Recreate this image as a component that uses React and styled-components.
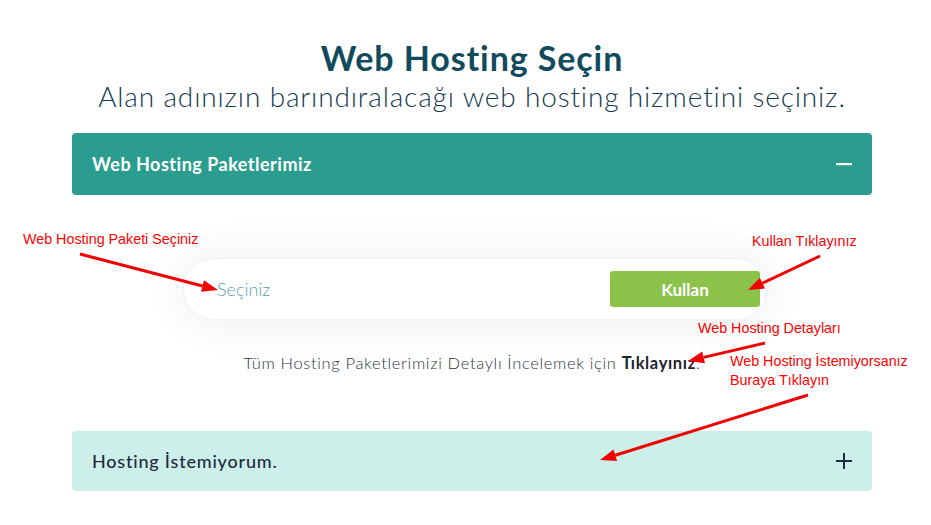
import styled, { createGlobalStyle } from "styled-components";

const GlobalStyle = createGlobalStyle`
  html, body {
    margin: 0;
    padding: 0;
    background: #ffffff;
  }
  body {
    font-family: "Lato", "Open Sans", sans-serif;
  }
`;

const Page = styled.div`
  position: relative;
  width: 931px;
  height: 525px;
  overflow: hidden;
  background: #fff;
`;

const Main = styled.div`
  display: flex;
  flex-direction: column;
  padding: 38px 59px 0 72px;
`;

const Title = styled.h1`
  margin: 0;
  text-align: center;
  font-size: 34px;
  line-height: 40px;
  font-weight: 700;
  letter-spacing: 0.9px;
  color: #0f4b5c;
`;

const Subtitle = styled.p`
  margin: 0;
  text-align: center;
  font-size: 28px;
  line-height: 36px;
  font-weight: 300;
  letter-spacing: 0.85px;
  color: #163b4f;
`;

const AccordionHead = styled.div`
  display: flex;
  align-items: center;
  justify-content: space-between;
  height: ${(p) => (p.$open ? "62px" : "60px")};
  padding: 0 20px;
  border-radius: 4px;
  background: ${(p) => (p.$open ? "#2a9d8f" : "#cdefe9")};
  color: ${(p) => (p.$open ? "#ffffff" : "#1e2a40")};
  font-size: 18px;
  letter-spacing: ${(p) => (p.$open ? "0.5px" : "0.8px")};
  font-weight: ${(p) => (p.$open ? 700 : 500)};
  margin-top: ${(p) => (p.$open ? "19px" : "0")};
`;

const Body = styled.div`
  display: flex;
  flex-direction: column;
  align-items: center;
  padding: 63px 0 0;
  height: 173px;
`;

const SearchCard = styled.div`
  display: flex;
  align-items: center;
  justify-content: space-between;
  width: 584px;
  height: 62px;
  box-sizing: border-box;
  margin-left: 6px;
  padding: 0 6px 0 33px;
  border-radius: 31px;
  background: #fff;
  border: 1px solid #f2f2f2;
  box-shadow: 0 0 45px rgba(0, 0, 0, 0.08);
`;

const Placeholder = styled.span`
  font-size: 18px;
  font-weight: 300;
  color: #5b9fb0;
`;

const UseButton = styled.button`
  width: 150px;
  height: 36px;
  border: none;
  border-radius: 3px;
  background: #8bc34a;
  color: #fff;
  font-family: inherit;
  font-size: 17px;
  font-weight: 700;
  cursor: pointer;
`;

const InfoLine = styled.p`
  margin: 33px 0 0;
  font-size: 16.5px;
  font-weight: 300;
  letter-spacing: 0.65px;
  color: #2d3340;
  b {
    font-weight: 700;
    color: #1e2330;
  }
`;

const Annotations = styled.div`
  position: absolute;
  inset: 0;
  pointer-events: none;
`;

const Note = styled.span`
  position: absolute;
  left: ${(p) => p.$x}px;
  top: ${(p) => p.$y}px;
  font-family: "Liberation Sans", sans-serif;
  font-size: 14.3px;
  line-height: 19px;
  color: #ff0000;
  white-space: nowrap;
`;

const Arrows = styled.svg`
  position: absolute;
  inset: 0;
`;

function Minus() {
  return (
    <svg width="16" height="16" viewBox="0 0 16 16">
      <rect x="0" y="7" width="16" height="2.2" fill="currentColor" />
    </svg>
  );
}

function Plus() {
  return (
    <svg width="16" height="16" viewBox="0 0 16 16">
      <rect x="0" y="7" width="16" height="2" fill="currentColor" />
      <rect x="7" y="0" width="2" height="16" fill="currentColor" />
    </svg>
  );
}

const arrows = [
  [80, 254, 218, 290],
  [820, 256, 748, 290],
  [765, 343, 688, 361],
  [808, 395, 600, 460],
];

function Arrow({ from }) {
  const [x1, y1, x2, y2] = from;
  const a = Math.atan2(y2 - y1, x2 - x1);
  const len = 16;
  const w = 6;
  const bx = x2 - len * Math.cos(a);
  const by = y2 - len * Math.sin(a);
  const px = -Math.sin(a) * w;
  const py = Math.cos(a) * w;
  return (
    <g>
      <line x1={x1} y1={y1} x2={bx} y2={by} stroke="#f00000" strokeWidth="3" />
      <polygon
        points={`${x2},${y2} ${bx + px},${by + py} ${bx - px},${by - py}`}
        fill="#f00000"
      />
    </g>
  );
}

export default function App() {
  return (
    <Page>
      <GlobalStyle />
      <Main>
        <Title>Web Hosting Seçin</Title>
        <Subtitle>Alan adınızın barındıralacağı web hosting hizmetini seçiniz.</Subtitle>
        <AccordionHead $open>
          <span>Web Hosting Paketlerimiz</span>
          <Minus />
        </AccordionHead>
        <Body>
          <SearchCard>
            <Placeholder>Seçiniz</Placeholder>
            <UseButton>Kullan</UseButton>
          </SearchCard>
          <InfoLine>
            Tüm Hosting Paketlerimizi Detaylı İncelemek için <b>Tıklayınız</b>.
          </InfoLine>
        </Body>
        <AccordionHead>
          <span>Hosting İstemiyorum.</span>
          <Plus />
        </AccordionHead>
      </Main>
      <Annotations>
        <Arrows width="931" height="525">
          {arrows.map((a, i) => (
            <Arrow key={i} from={a} />
          ))}
        </Arrows>
        <Note $x={23} $y={230}>Web Hosting Paketi Seçiniz</Note>
        <Note $x={752} $y={232}>Kullan Tıklayınız</Note>
        <Note $x={698} $y={319}>Web Hosting Detayları</Note>
        <Note $x={730} $y={352}>Web Hosting İstemiyorsanız</Note>
        <Note $x={730} $y={371}>Buraya Tıklayın</Note>
      </Annotations>
    </Page>
  );
}
